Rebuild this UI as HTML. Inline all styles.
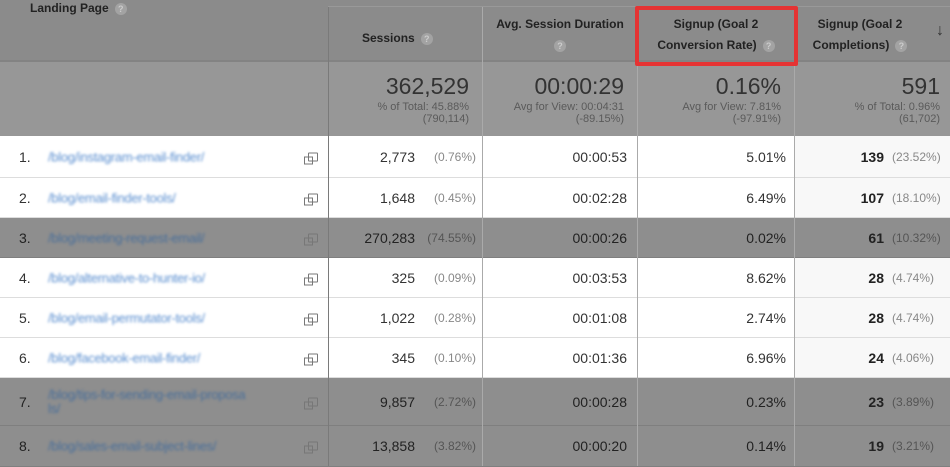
<!DOCTYPE html>
<html><head><style>
body{margin:0;width:950px;height:466px;overflow:hidden;font-family:"Liberation Sans",Arial,sans-serif;background:#fff;position:relative}
.a{position:absolute}
.hdr{left:0;top:0;width:950px;height:62px;background:#8b8b8b}
.sum{left:0;top:62px;width:950px;height:74px;background:#979797}
.vl{position:absolute;width:1px;background:#7a7a7a;top:0;height:466px}
.row{position:absolute;left:0;width:950px;border-bottom:1px solid #ddd;font-size:14px;color:#333}
.row.g{background:#8e8e8e;border-bottom:1px solid #7f7f7f;color:#222}
.row div{position:absolute;top:50%;transform:translateY(-50%)}
.row .r4{background:#f8f8f8;left:795px;width:155px;top:0;height:100%;transform:none}
.row.g .r4{background:#8e8e8e}
.n{left:19px}
.u{left:48px;color:#5b8fd0;filter:blur(1.2px);font-size:13px;letter-spacing:-.3px}
.g .u{color:#4a6f9a}
.ic{left:308px;width:8px;height:7px;border:1.5px solid #777;border-radius:1px}
.ic:after{content:"";position:absolute;left:-5px;top:3px;width:7px;height:6px;border:1.5px solid #777;background:inherit}
.c2{right:323px}
.c3{right:164px}
.c4{right:66px;font-weight:bold;color:#222}.p4{left:892px;font-size:12px;color:#888}
.g .p4{color:#555}
.th{font-weight:bold;font-size:12px;color:#222;text-align:center;line-height:21px}
.q{display:inline-block;width:12px;height:12px;border-radius:50%;background:#a3a3a3;color:#ccc;font-size:9px;line-height:12px;text-align:center;vertical-align:middle;margin-left:6px}
.big{font-size:23px;color:#333;text-align:right}
.sm{font-size:11px;color:#5a5a5a;text-align:right;line-height:12px}
</style></head><body>
<div class="a hdr"></div>
<div class="a sum"></div>
<div class="a" style="left:0;top:60px;width:950px;height:2px;background:#838383"></div>
<div class="a th" style="left:30px;top:-2px">Landing Page<span class="q">?</span></div>
<div class="a th" style="left:362px;top:28px">Sessions<span class="q">?</span></div>
<div class="a th" style="left:483px;top:14px;width:154px">Avg. Session Duration<br><span class="q" style="margin:0">?</span></div>
<div class="a th" style="left:638px;top:14px;width:156px">Signup (Goal 2<br>Conversion Rate)<span class="q">?</span></div>
<div class="a th" style="left:795px;top:14px;width:130px">Signup (Goal 2<br>Completions)<span class="q">?</span></div>
<div class="a" style="left:936px;top:22px;font-size:16px;color:#333">↓</div>

<div class="a big" style="right:481px;top:73px">362,529</div>
<div class="a sm" style="right:481px;top:101px">% of Total: 45.88%<br>(790,114)</div>
<div class="a big" style="right:326px;top:73px">00:00:29</div>
<div class="a sm" style="right:326px;top:101px">Avg for View: 00:04:31<br>(-89.15%)</div>
<div class="a big" style="right:169px;top:73px">0.16%</div>
<div class="a sm" style="right:169px;top:101px">Avg for View: 7.81%<br>(-97.91%)</div>
<div class="a big" style="right:10px;top:73px">591</div>
<div class="a sm" style="right:10px;top:101px">% of Total: 0.96%<br>(61,702)</div>

<div class="row" style="top:136px;height:41px"><div class="r4"></div><div class="n">1.</div><div class="u">/blog/instagram-email-finder/</div><div class="ic"></div><div style="right:535px">2,773</div><div style="right:474px;font-size:12px;color:#888">(0.76%)</div><div class="c2">00:00:53</div><div class="c3">5.01%</div><div class="c4">139</div><div class="p4">(23.52%)</div></div>
<div class="row" style="top:178px;height:39px"><div class="r4"></div><div class="n">2.</div><div class="u">/blog/email-finder-tools/</div><div class="ic"></div><div style="right:535px">1,648</div><div style="right:474px;font-size:12px;color:#888">(0.45%)</div><div class="c2">00:02:28</div><div class="c3">6.49%</div><div class="c4">107</div><div class="p4">(18.10%)</div></div>
<div class="row g" style="top:218px;height:39px"><div class="n">3.</div><div class="u">/blog/meeting-request-email/</div><div class="ic"></div><div style="right:535px">270,283</div><div style="right:474px;font-size:12px;color:#555">(74.55%)</div><div class="c2">00:00:26</div><div class="c3">0.02%</div><div class="c4">61</div><div class="p4">(10.32%)</div></div>
<div class="row" style="top:258px;height:39px"><div class="r4"></div><div class="n">4.</div><div class="u">/blog/alternative-to-hunter-io/</div><div class="ic"></div><div style="right:535px">325</div><div style="right:474px;font-size:12px;color:#888">(0.09%)</div><div class="c2">00:03:53</div><div class="c3">8.62%</div><div class="c4">28</div><div class="p4">(4.74%)</div></div>
<div class="row" style="top:298px;height:39px"><div class="r4"></div><div class="n">5.</div><div class="u">/blog/email-permutator-tools/</div><div class="ic"></div><div style="right:535px">1,022</div><div style="right:474px;font-size:12px;color:#888">(0.28%)</div><div class="c2">00:01:08</div><div class="c3">2.74%</div><div class="c4">28</div><div class="p4">(4.74%)</div></div>
<div class="row" style="top:338px;height:39px"><div class="r4"></div><div class="n">6.</div><div class="u">/blog/facebook-email-finder/</div><div class="ic"></div><div style="right:535px">345</div><div style="right:474px;font-size:12px;color:#888">(0.10%)</div><div class="c2">00:01:36</div><div class="c3">6.96%</div><div class="c4">24</div><div class="p4">(4.06%)</div></div>
<div class="row g" style="top:378px;height:47px"><div class="n">7.</div><div class="u" style="line-height:14px">/blog/tips-for-sending-email-proposa<br>ls/</div><div class="ic"></div><div style="right:535px">9,857</div><div style="right:474px;font-size:12px;color:#555">(2.72%)</div><div class="c2">00:00:28</div><div class="c3">0.23%</div><div class="c4">23</div><div class="p4">(3.89%)</div></div>
<div class="row g" style="top:426px;height:40px"><div class="n">8.</div><div class="u">/blog/sales-email-subject-lines/</div><div class="ic"></div><div style="right:535px">13,858</div><div style="right:474px;font-size:12px;color:#555">(3.82%)</div><div class="c2">00:00:20</div><div class="c3">0.14%</div><div class="c4">19</div><div class="p4">(3.21%)</div></div>

<div class="vl" style="left:328px;top:6px;height:460px"></div>
<div class="vl" style="left:482px;top:6px;height:460px;background:#aaa"></div>
<div class="vl" style="left:637px;top:6px;height:460px;background:#aaa"></div>
<div class="vl" style="left:794px;top:6px;height:460px;background:#aaa"></div>
<div class="a" style="left:328px;top:6px;width:622px;height:1px;background:#999"></div>
<div class="a" style="left:635px;top:6px;width:155px;height:52px;border:4px solid #e53333;border-radius:2px"></div>
</body></html>
